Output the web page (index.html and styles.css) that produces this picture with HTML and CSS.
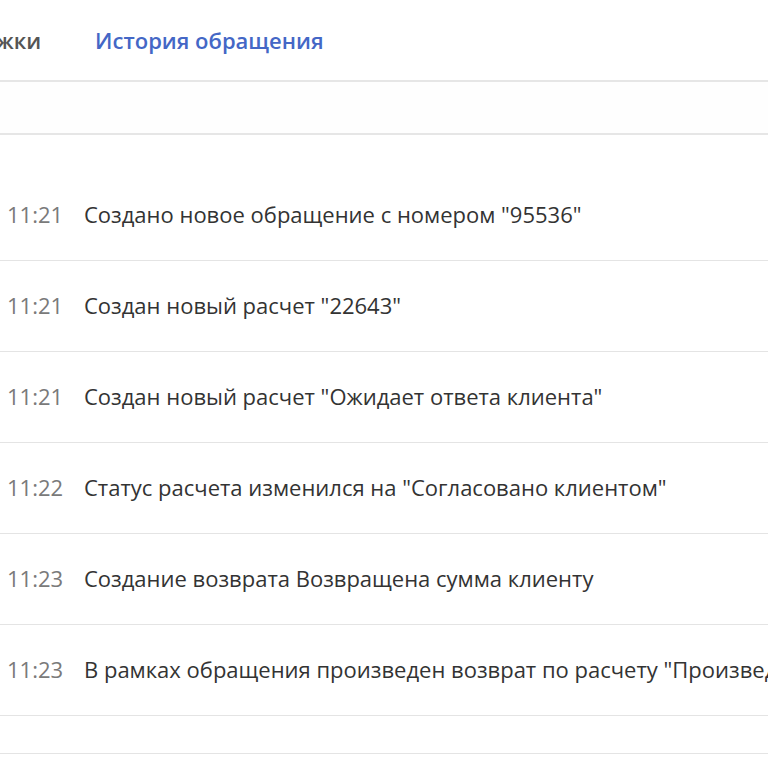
FILE: index.html
```html
<!DOCTYPE html>
<html lang="ru">
<head>
<meta charset="utf-8">
<link rel="stylesheet" href="styles.css">
</head>
<body>
<div class="page">
  <nav class="tabs">
    <span class="tab tab-cut">жки</span>
    <span class="tab tab-active">История обращения</span>
  </nav>
  <div class="toolbar"></div>
  <div class="list">
    <div class="row"><span class="time">11:21</span><span class="text">Создано новое обращение с номером "95536"</span></div>
    <div class="row"><span class="time">11:21</span><span class="text">Создан новый расчет "22643"</span></div>
    <div class="row"><span class="time">11:21</span><span class="text">Создан новый расчет "Ожидает ответа клиента"</span></div>
    <div class="row"><span class="time">11:22</span><span class="text">Статус расчета изменился на "Согласовано клиентом"</span></div>
    <div class="row"><span class="time">11:23</span><span class="text">Создание возврата Возвращена сумма клиенту</span></div>
    <div class="row"><span class="time">11:23</span><span class="text">В рамках обращения произведен возврат по расчету "Произвед</span></div>
    <div class="row row-empty"></div>
  </div>
</div>
</body>
</html>
```

FILE: styles.css
```css
html, body {
  margin: 0;
  padding: 0;
  background: #ffffff;
}
body {
  font-family: "Open Sans", "Noto Sans", sans-serif;
  overflow: hidden;
  width: 768px;
  height: 768px;
}
.page {
  width: 768px;
}
.tabs {
  display: flex;
  align-items: center;
  height: 80px;
  gap: 54px;
  border-bottom: 2px solid #e6e6e6;
  overflow: hidden;
}
.tab {
  font-size: 22px;
  font-weight: 600;
  color: #555555;
  white-space: nowrap;
}
.tab-cut {
  margin-left: -4px;
}
.tab-active {
  color: #4467c6;
}
.toolbar {
  height: 51px;
  background: #fefefe;
  border-bottom: 2px solid #e6e6e6;
}
.list {
  padding-top: 36px;
}
.row {
  display: flex;
  align-items: center;
  height: 90px;
  box-sizing: border-box;
  padding-bottom: 3px;
  border-bottom: 1px solid #e4e4e4;
  white-space: nowrap;
  overflow: hidden;
}
.row + .row {
  height: 91px;
}
.row-empty {
  height: 38px;
}
.row + .row-empty {
  height: 38px;
}
.time {
  width: 84px;
  flex: none;
  box-sizing: border-box;
  padding-left: 7px;
  font-size: 22px;
  color: #7a7a7a;
}
.text {
  font-size: 22px;
  color: #333333;
}
```
